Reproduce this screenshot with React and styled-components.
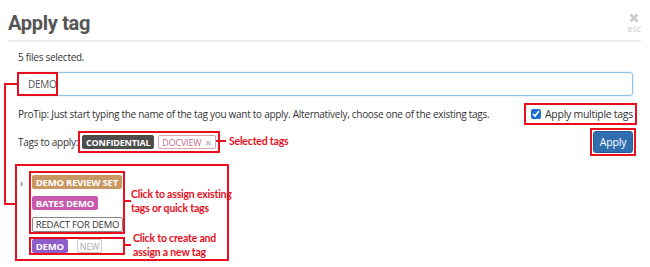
import React from 'react';
import styled, { createGlobalStyle } from 'styled-components';

const Global = createGlobalStyle`
  html, body { margin: 0; padding: 0; background: #fff; }
  body { font-family: "Open Sans", "Noto Sans", sans-serif; color: #333; }
`;

const RED = '#e8101e';

const Page = styled.div`
  position: relative;
  width: 650px;
  height: 267px;
  overflow: hidden;
`;

const Header = styled.div`
  display: flex;
  justify-content: space-between;
  align-items: flex-start;
  margin: 0 9px 0 8px;
  padding: 10px 0 4px;
  border-bottom: 2px solid #eee;
`;

const Title = styled.h2`
  margin: 0;
  font-family: Roboto, "Open Sans", sans-serif;
  font-size: 20px;
  line-height: 26px;
  font-weight: 700;
  color: #555;
  letter-spacing: -0.3px;
`;

const Close = styled.div`
  display: flex;
  flex-direction: column;
  align-items: center;
  color: #ccc;
  line-height: 1;
  margin-top: 3px;
  span { font-size: 9px; margin-top: 1px; }
`;

const Body = styled.div`
  padding: 8px 17px 0 18px;
  font-size: 10px;
  letter-spacing: -0.28px;
`;

const Line = styled.div`
  line-height: 14px;
  margin-bottom: ${p => p.$mb || 0}px;
`;

const Callout = styled.div`
  display: inline-flex;
  flex-direction: ${p => (p.$col ? 'column' : 'row')};
  align-items: ${p => (p.$col ? 'flex-start' : 'center')};
  gap: ${p => p.$gap || 0}px;
  border: 2px solid ${RED};
  padding: ${p => p.$pad || '1px'};
  margin-right: ${p => p.$mr || 0}px;
  width: ${p => (p.$w ? p.$w + 'px' : 'auto')};
  height: ${p => (p.$h ? p.$h + 'px' : 'auto')};
  box-sizing: border-box;
  white-space: nowrap;
`;

const InputBox = styled.div`
  display: flex;
  align-items: center;
  height: 22px;
  border: 1px solid #8fc1ec;
  border-radius: 3px;
  box-shadow: 0 0 2px rgba(102, 175, 233, 0.5);
`;

const Typed = styled.div`
  margin-left: -2px;
  height: 24px;
  width: 41px;
  padding-left: 9px;
  box-sizing: border-box;
  display: flex;
  align-items: center;
  border: 2px solid ${RED};
  color: #555;
  font-size: 10px;
  &::after { content: ''; width: 1px; height: 12px; background: #333; margin-left: 1px; }
`;

const Row = styled.div`
  display: flex;
  justify-content: space-between;
  align-items: center;
  white-space: nowrap;
  margin-top: ${p => p.$mt || 0}px;
`;

const Inline = styled.div`
  display: flex;
  align-items: center;
`;

const Check = styled.input`
  margin: 0 4px 0 0;
  width: 10px;
  height: 10px;
  accent-color: #1f6fd0;
`;

const CheckLabel = styled.span`
  font-size: 10.5px;
  color: #333;
`;

const Tag = styled.span`
  display: inline-flex;
  align-items: center;
  height: ${p => p.$h || 14}px;
  padding: 0 ${p => p.$px ?? 3}px;
  border-radius: 2px;
  font-size: ${p => p.$fs || 9}px;
  letter-spacing: -0.2px;
  box-sizing: border-box;
  white-space: nowrap;
  color: ${p => p.$fg || '#fff'};
  background: ${p => p.$bg || 'transparent'};
  border: 1px solid ${p => p.$bd || p.$bg || 'transparent'};
  font-weight: ${p => (p.$light ? 400 : 700)};
`;

const X = styled.span`
  color: #c8c8c8;
  margin-left: 4px;
  font-size: 8px;
`;

const ApplyBtn = styled.button`
  font-family: inherit;
  font-size: 10.5px;
  letter-spacing: -0.2px;
  color: #fff;
  background: #2f6fb0;
  border: 1px solid #24599a;
  border-radius: 3px;
  width: 40px;
  height: 22px;
  padding: 0;
  display: block;
`;

const Note = styled.div`
  position: absolute;
  left: ${p => p.$x}px;
  top: ${p => p.$y}px;
  color: ${RED};
  font-family: "Lato", "Noto Sans", sans-serif;
  font-weight: 700;
  font-size: 10.5px;
  letter-spacing: -0.2px;
  line-height: 14px;
  white-space: nowrap;
`;

const Wire = styled.div`
  position: absolute;
  left: ${p => p.$x}px;
  top: ${p => p.$y}px;
  width: ${p => p.$w || 2}px;
  height: ${p => p.$h || 2}px;
  background: ${RED};
`;

const Suggest = styled.div`
  margin: 8px 0 0 -3px;
  width: 214px;
  height: 97px;
  box-sizing: border-box;
  border: 2px solid ${RED};
  display: flex;
  padding: 5px 0 0 3px;
`;

const Chevron = styled.span`
  font-size: 10px;
  line-height: 10px;
  color: #555;
  margin: 7px 6px 0 0;
`;

const Stack = styled.div`
  display: flex;
  flex-direction: column;
  gap: 3px;
`;

export default function App() {
  return (
    <Page>
      <Global />
      <Header>
        <Title>Apply tag</Title>
        <Close>
          <svg width="10" height="10" viewBox="0 0 10 10">
            <path d="M1.5 1.5 L8.5 8.5 M8.5 1.5 L1.5 8.5" stroke="#ccc" strokeWidth="2.6" />
          </svg>
          <span>esc</span>
        </Close>
      </Header>
      <Body>
        <Line $mb={8}>5 files selected.</Line>
        <InputBox>
          <Typed>DEMO</Typed>
        </InputBox>
        <Row $mt={7}>
          <span>ProTip: Just start typing the name of the tag you want to apply. Alternatively, choose one of the existing tags.</span>
          <Callout $pad="2px 2px 2px 5px" $mr={-4}>
            <Check type="checkbox" defaultChecked readOnly />
            <CheckLabel>Apply multiple tags</CheckLabel>
          </Callout>
        </Row>
        <Row $mt={3}>
          <Inline>
            <span>Tags to apply:</span>
            <Callout $gap={4} $pad="2px">
              <Tag $bg="#4d4d4d">CONFIDENTIAL</Tag>
              <Tag $fg="#c96b8f" $bd="#d9a4b8" $light>DOCVIEW<X>✖</X></Tag>
            </Callout>
          </Inline>
          <Callout $pad="1px" $mr={-3}>
            <ApplyBtn>Apply</ApplyBtn>
          </Callout>
        </Row>
        <Suggest>
          <Chevron>›</Chevron>
          <Stack>
            <Callout $col $gap={7} $pad="2px 1px" $w={96} $h={63}>
              <Tag $bg="#c99862" $fs={9.5}>DEMO REVIEW SET</Tag>
              <Tag $bg="#c75aae" $fs={9.5}>BATES DEMO</Tag>
              <Tag $fg="#333" $bd="#888" $light $h={15} $fs={9.5}>REDACT FOR DEMO</Tag>
            </Callout>
            <Callout $gap={9} $pad="0 1px" $w={96} $h={18}>
              <Tag $bg="#8f5dc9" $fs={9.5}>DEMO</Tag>
              <Tag $fg="#aaa" $bd="#ccc" $light $px={2}>NEW</Tag>
            </Callout>
          </Stack>
        </Suggest>
      </Body>
      <Wire $x={4} $y={83} $w={13} />
      <Wire $x={4} $y={83} $h={122} />
      <Wire $x={4} $y={203} $w={12} />
      <Wire $x={216} $y={140} $w={10} />
      <Note $x={229} $y={134}>Selected tags</Note>
      <Wire $x={124} $y={200} $w={7} />
      <Note $x={131} $y={187}>Click to assign existing<br />tags or quick tags</Note>
      <Wire $x={124} $y={244} $w={7} />
      <Note $x={133} $y={231}>Click to create and<br />assign a new tag</Note>
    </Page>
  );
}
